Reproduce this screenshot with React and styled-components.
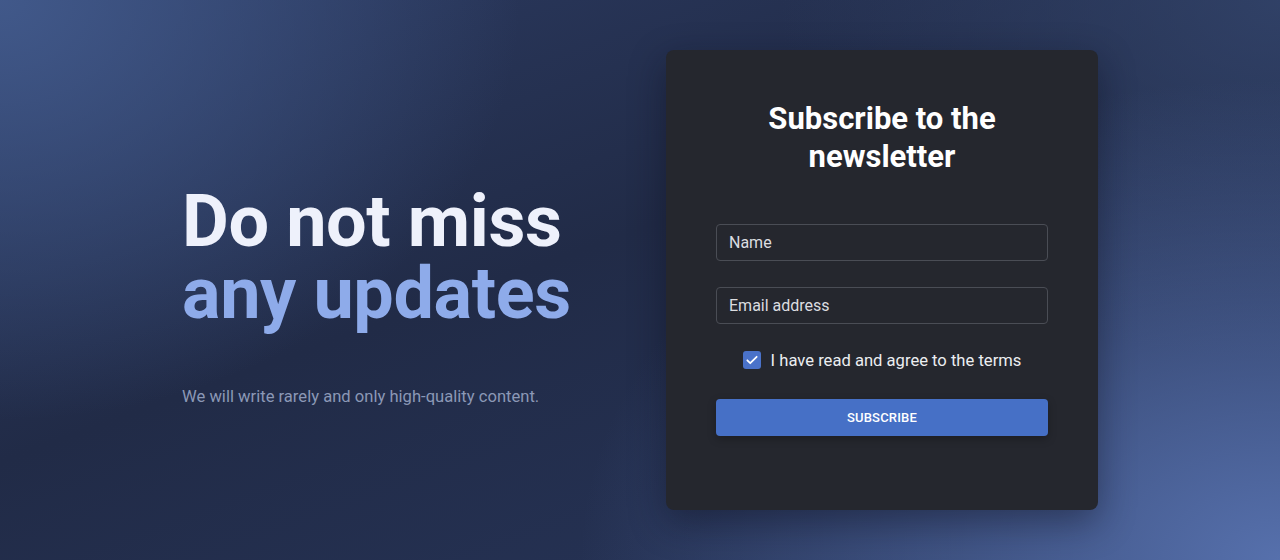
import React, { useState } from 'react'
import styled, { createGlobalStyle } from 'styled-components'

const GlobalStyle = createGlobalStyle`
  html, body { margin: 0; padding: 0; }
  body {
    font-family: Roboto, 'Liberation Sans', sans-serif;
    background: #23304f;
  }
  * { box-sizing: border-box; }
`

const Page = styled.div`
  min-height: 560px;
  display: flex;
  align-items: center;
  justify-content: center;
  background:
    radial-gradient(ellipse 520px 420px at 0% 0%, rgba(66, 90, 140, 0.95), rgba(66, 90, 140, 0) 100%),
    radial-gradient(ellipse 700px 480px at 100% 100%, rgba(86, 112, 172, 1), rgba(86, 112, 172, 0) 100%),
    radial-gradient(ellipse 500px 360px at 100% 0%, rgba(52, 70, 110, 0.8), rgba(52, 70, 110, 0) 100%),
    linear-gradient(160deg, #2c3b62 0%, #212b47 45%, #27355a 100%);
`

const Container = styled.div`
  width: 916px;
  display: flex;
  align-items: center;
  justify-content: space-between;
`

const Intro = styled.div`
  padding-top: 34px;
`

const Headline = styled.h1`
  margin: 0;
  font-size: 72px;
  line-height: 72px;
  font-weight: 700;
  letter-spacing: -0.4px;
  color: #eef1fb;
`

const Accent = styled.span`
  display: block;
  color: #8eabea;
`

const Lead = styled.p`
  margin: 55px 0 0;
  font-size: 16.6px;
  line-height: 24px;
  color: #8b98b6;
`

const Card = styled.div`
  width: 432px;
  padding: 50px 50px 74px;
  background: #25272e;
  border-radius: 8px;
  box-shadow: 0 12px 36px rgba(10, 14, 28, 0.45);
`

const Title = styled.h2`
  margin: 0 0 49px;
  text-align: center;
  font-size: 31px;
  line-height: 37.5px;
  font-weight: 700;
  color: #ffffff;
`

const Form = styled.form`
  display: flex;
  flex-direction: column;
  gap: 26px;
`

const Input = styled.input`
  width: 100%;
  height: 37px;
  padding: 0 12px;
  background: transparent;
  border: 1px solid #4a4d55;
  border-radius: 4px;
  font-family: inherit;
  font-size: 16px;
  color: #e6e7ea;
  outline: none;

  &::placeholder { color: #dcdde0; }
`

const CheckRow = styled.label`
  height: 24px;
  margin: -2px 0 1px;
  display: flex;
  align-items: center;
  justify-content: center;
  gap: 10px;
  font-size: 16.6px;
  color: #eceef1;
  cursor: pointer;
`

const Box = styled.span`
  width: 18px;
  height: 18px;
  border-radius: 3px;
  display: flex;
  align-items: center;
  justify-content: center;
  background: ${p => (p.$checked ? '#4a72c9' : 'transparent')};
  border: ${p => (p.$checked ? 'none' : '2px solid #6b6e76')};
`

const HiddenCheck = styled.input`
  display: none;
`

const Button = styled.button`
  height: 37px;
  border: none;
  border-radius: 4px;
  background: #4670c6;
  color: #ffffff;
  font-family: inherit;
  font-size: 13px;
  font-weight: 500;
  letter-spacing: 0.2px;
  text-transform: uppercase;
  box-shadow: 0 3px 8px rgba(0, 0, 0, 0.25);
  cursor: pointer;
`

export default function App() {
  const [agreed, setAgreed] = useState(true)

  return (
    <>
      <GlobalStyle />
      <Page>
        <Container>
          <Intro>
            <Headline>
              Do not miss
              <Accent>any updates</Accent>
            </Headline>
            <Lead>We will write rarely and only high-quality content.</Lead>
          </Intro>

          <Card>
            <Title>Subscribe to the<br />newsletter</Title>
            <Form onSubmit={e => e.preventDefault()}>
              <Input placeholder='Name' />
              <Input placeholder='Email address' />
              <CheckRow>
                <HiddenCheck type='checkbox' checked={agreed} onChange={() => setAgreed(!agreed)} />
                <Box $checked={agreed}>
                  {agreed && (
                    <svg width='14' height='14' viewBox='0 0 24 24' fill='none' stroke='#fff' strokeWidth='3' strokeLinecap='round' strokeLinejoin='round'>
                      <path d='M4 12.5l5 5L20 6.5' />
                    </svg>
                  )}
                </Box>
                I have read and agree to the terms
              </CheckRow>
              <Button type='submit'>Subscribe</Button>
            </Form>
          </Card>
        </Container>
      </Page>
    </>
  )
}
